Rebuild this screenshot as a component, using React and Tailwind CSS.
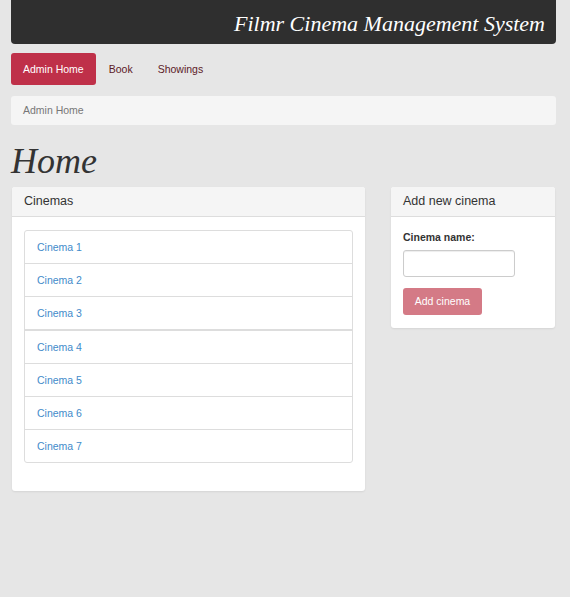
import React from "react";

const cinemas = ["Cinema 1", "Cinema 2", "Cinema 3", "Cinema 4", "Cinema 5", "Cinema 6", "Cinema 7"];

function Panel({ title, className, children }) {
  return (
    <div className={`bg-white rounded-[3px] shadow-[0_1px_2px_rgba(0,0,0,0.08)] ${className}`}>
      <div className="h-[30px] flex items-center px-3 bg-[#f5f5f5] border-b border-[#dddddd] rounded-t-[3px] text-[12.5px] text-[#333]">
        {title}
      </div>
      {children}
    </div>
  );
}

export default function App() {
  return (
    <div className="min-h-[597px] bg-[#e6e6e6] pl-[11px] pr-[14px] font-['Liberation_Sans',Arial,sans-serif] text-[10.5px] text-[#333]">
      <div className="h-[44px] bg-[#2f2f2f] rounded-b-[4px] flex items-center justify-end pr-[11px] pt-[3px]">
        <span className="font-['Liberation_Serif',serif] italic text-[22px] leading-[22px] text-white">
          Filmr Cinema Management System
        </span>
      </div>

      <div className="flex gap-[1px] mt-[9px]">
        <a className="h-[32px] px-3 pt-[1px] flex items-center rounded-[3px] bg-[#bf3049] text-white">Admin Home</a>
        <a className="h-[32px] px-3 pt-[1px] flex items-center text-[#5c1a26]">Book</a>
        <a className="h-[32px] px-3 pt-[1px] flex items-center text-[#5c1a26]">Showings</a>
      </div>

      <div className="mt-[11px] h-[29px] flex items-center px-3 pt-[1px] bg-[#f5f5f5] rounded-[3px] text-[#777]">
        Admin Home
      </div>

      <h1 className="mt-[16px] mb-[6px] h-[40px] leading-[40px] font-['Liberation_Serif',serif] italic text-[36px] text-[#333]">
        Home
      </h1>

      <div className="flex justify-between items-start">
        <Panel title="Cinemas" className="w-[353px] ml-[1px]">
          <div className="px-3 pt-[13px] pb-[28px]">
            <div className="border border-[#dddddd] rounded-[3px]">
              {cinemas.map((c, i) => (
                <div
                  key={c}
                  className={`flex items-center px-3 pt-[1px] text-[#428bca] ${i === 0 ? "h-[32px]" : i === 3 ? "h-[34px] border-t-2 border-[#dddddd]" : "h-[33px] border-t border-[#dddddd]"}`}
                >
                  {c}
                </div>
              ))}
            </div>
          </div>
        </Panel>

        <Panel title="Add new cinema" className="w-[164px] mr-[1px]">
          <div className="px-3 pt-[13px] pb-[13px]">
            <div className="font-bold leading-[14px]">Cinema name:</div>
            <input className="mt-[6px] block w-[112px] h-[27px] border border-[#cccccc] rounded-[3px] bg-white shadow-[inset_0_1px_1px_rgba(0,0,0,0.075)]" />
            <button className="mt-[11px] w-[79px] h-[27px] rounded-[3px] bg-[#d47a86] text-white">Add cinema</button>
          </div>
        </Panel>
      </div>
    </div>
  );
}
